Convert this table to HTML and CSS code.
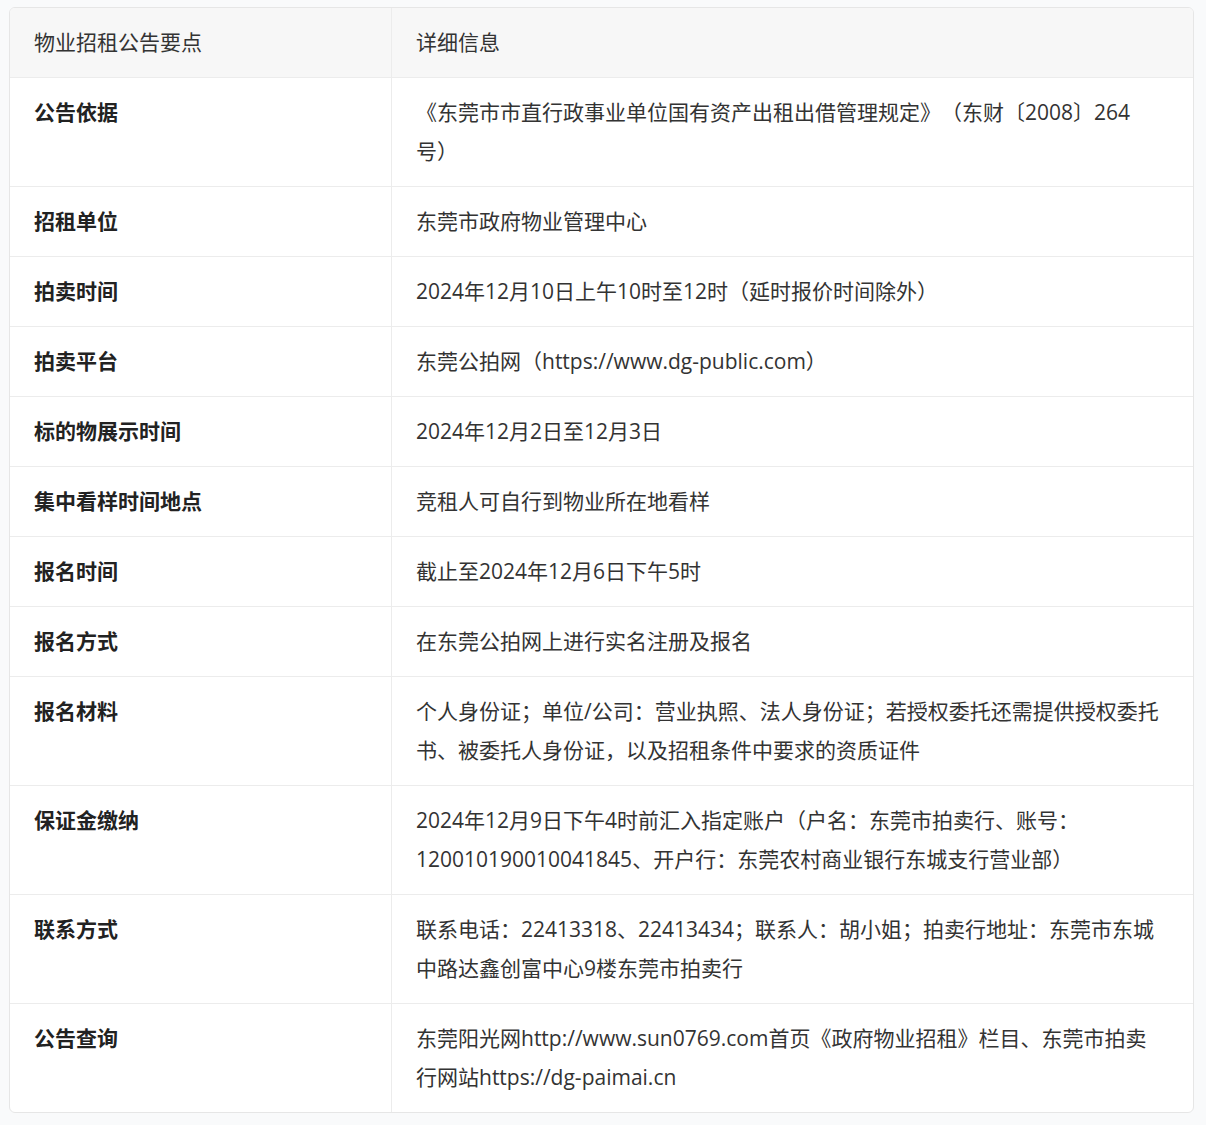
FILE: index.html
```html
<!DOCTYPE html>
<html lang="zh-CN">
<head>
<meta charset="utf-8">
<title>物业招租公告要点</title>
<link rel="stylesheet" href="styles.css">
</head>
<body>
<div class="wrap">
<table class="info">
<thead>
<tr><th class="c1">物业招租公告要点</th><th class="c2">详细信息</th></tr>
</thead>
<tbody>
<tr><td class="k">公告依据</td><td>《东莞市市直行政事业单位国有资产出租出借管理规定》（东财〔2008〕264号）</td></tr>
<tr><td class="k">招租单位</td><td>东莞市政府物业管理中心</td></tr>
<tr><td class="k">拍卖时间</td><td>2024年12月10日上午10时至12时（延时报价时间除外）</td></tr>
<tr><td class="k">拍卖平台</td><td>东莞公拍网（https://www.dg-public.com）</td></tr>
<tr><td class="k">标的物展示时间</td><td>2024年12月2日至12月3日</td></tr>
<tr><td class="k">集中看样时间地点</td><td>竞租人可自行到物业所在地看样</td></tr>
<tr><td class="k">报名时间</td><td>截止至2024年12月6日下午5时</td></tr>
<tr><td class="k">报名方式</td><td>在东莞公拍网上进行实名注册及报名</td></tr>
<tr><td class="k">报名材料</td><td>个人身份证；单位/公司：营业执照、法人身份证；若授权委托还需提供授权委托书、被委托人身份证，以及招租条件中要求的资质证件</td></tr>
<tr><td class="k">保证金缴纳</td><td>2024年12月9日下午4时前汇入指定账户（户名：东莞市拍卖行、账号：120010190010041845、开户行：东莞农村商业银行东城支行营业部）</td></tr>
<tr><td class="k">联系方式</td><td>联系电话：22413318、22413434；联系人：胡小姐；拍卖行地址：东莞市东城中路达鑫创富中心9楼东莞市拍卖行</td></tr>
<tr><td class="k">公告查询</td><td>东莞阳光网http://www.sun0769.com首页《政府物业招租》栏目、东莞市拍卖行网站https://dg-paimai.cn</td></tr>
</tbody>
</table>
</div>
</body>
</html>
```
FILE: styles.css
```css
html, body {
  margin: 0;
  padding: 0;
  background: #f9fafb;
}
body {
  font-family: "Open Sans", "Noto Sans CJK SC", sans-serif;
  color: #2b2b2b;
}
.wrap {
  margin: 7px 0 0 9px;
  width: 1183px;
  border: 1px solid #e6e6e6;
  border-radius: 6px;
  overflow: hidden;
  background: #fff;
}
.info {
  width: 100%;
  border-collapse: collapse;
  table-layout: fixed;
  font-size: 21px;
  line-height: 39px;
  text-spacing-trim: space-all;
}
.info th, .info td {
  text-align: left;
  vertical-align: top;
  padding: 15px 28px 15px 24px;
  border-top: 1px solid #ececec;
  border-left: 1px solid #ececec;
}
.info tr > :first-child { border-left: none; }
.info thead th {
  border-top: none;
  background: #f7f7f7;
  font-weight: 400;
  color: #333;
}
.info .c1 { width: 329px; }
.info td.k {
  font-weight: 700;
  color: #222;
}
.info td {
  color: #333;
}
```
